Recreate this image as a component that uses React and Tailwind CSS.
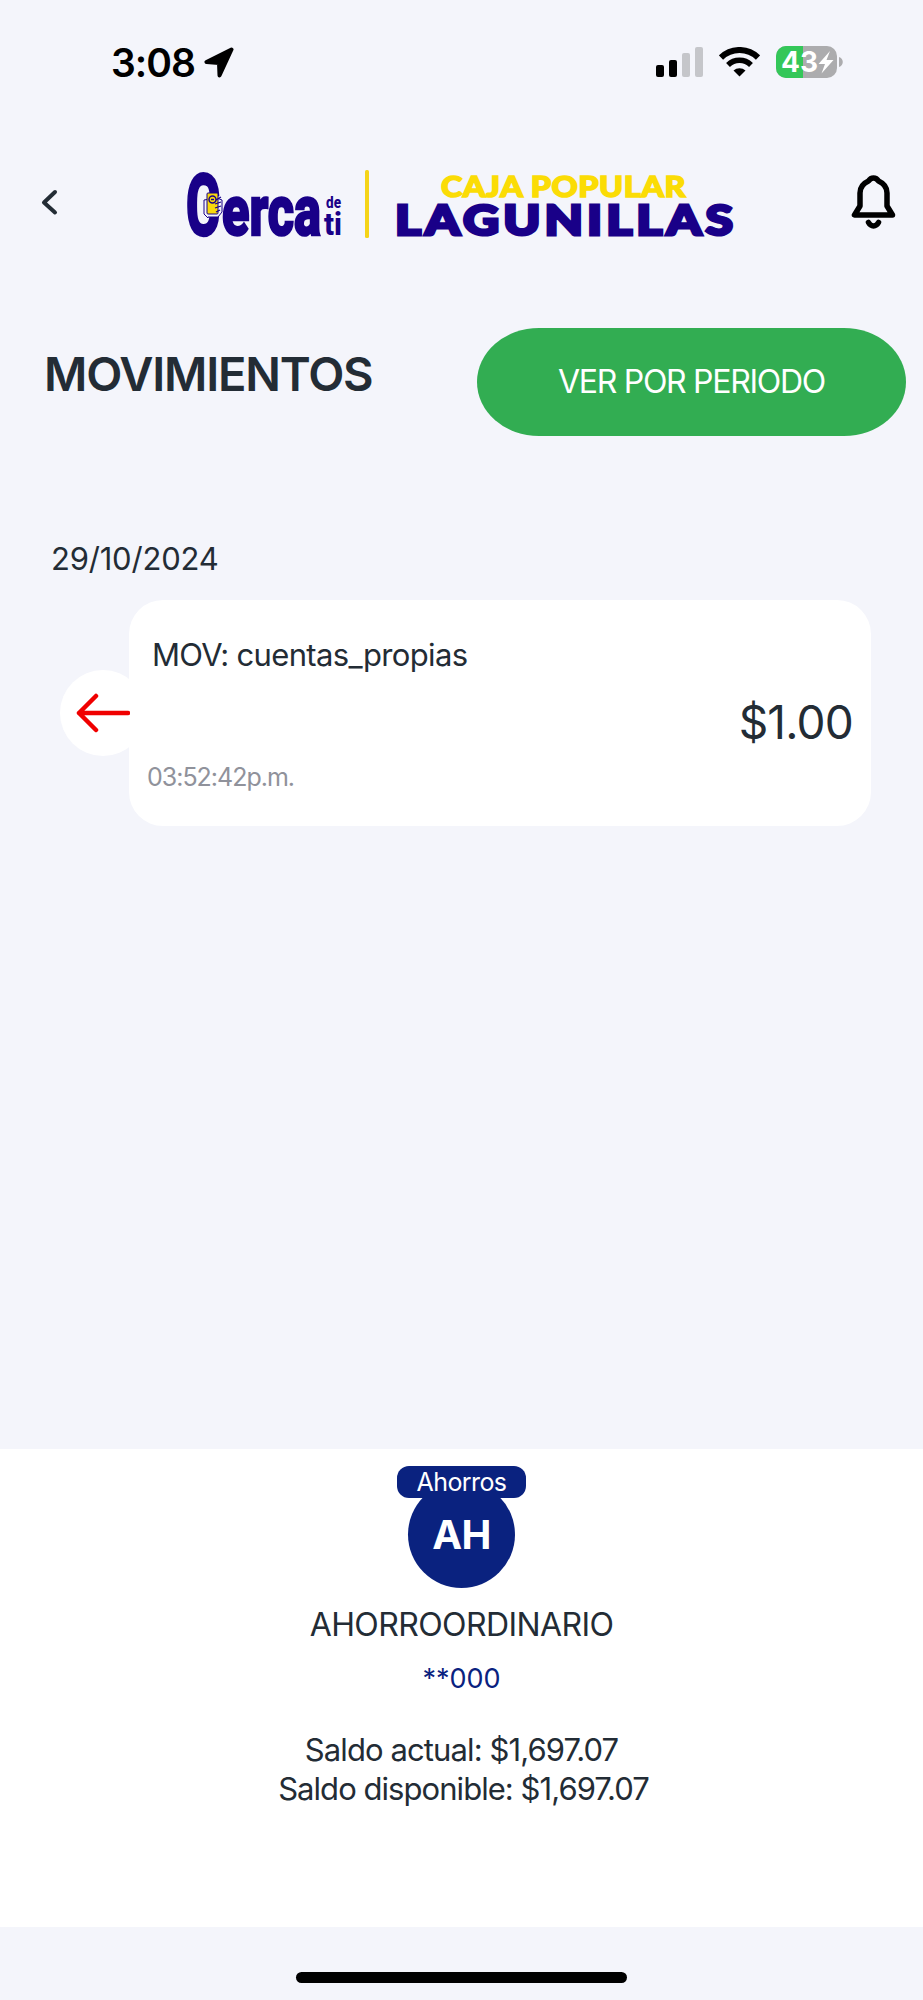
import React from 'react';

const movements = [
    {
        date: '29/10/2024',
        items: [{ id: 1, title: 'MOV: cuentas_propias', time: '03:52:42p.m.', amount: '$1.00' }]
    }
];

const StatusBar = () => (
    <div className="flex h-[124px] items-center justify-between pl-[111px] pr-[80px]">
        <div className="flex items-center gap-[9px]">
            <span className="text-[39px] leading-none font-semibold tracking-[-1px] text-black">3:08</span>
            <svg width="30" height="31" viewBox="0 0 30 31">
                <path d="M27.500 2.500 2.500 15 15 16 15.500 28.500Z" stroke="#000" strokeWidth="4" strokeLinejoin="round" />
            </svg>
        </div>
        <div className="flex items-center">
            <svg width="47" height="30" viewBox="0 0 47 30">
                <rect x="0" y="18" width="8" height="12" rx="2" />
                <rect x="13" y="13" width="8" height="17" rx="2" />
                <rect x="26" y="6" width="8" height="24" rx="2" fill="#c5c6ca" />
                <rect x="39" y="0" width="8" height="30" rx="2" fill="#c5c6ca" />
            </svg>
            <svg className="ml-4" width="41" height="30" viewBox="0 0 41 30" fill="none" stroke="#000">
                <path d="M2 10.500a26.500 26.500 0 0 1 37 0" strokeWidth="6" />
                <path d="M9 18a16.500 16.500 0 0 1 23 0" strokeWidth="5.500" />
                <path d="M20.500 29.500 14.500 23.500a9 9 0 0 1 12 0Z" fill="#000" stroke="none" />
            </svg>
            <svg className="ml-4" width="67" height="32" viewBox="0 0 67 32">
                <clipPath id="battery">
                    <rect width="61" height="32" rx="10" />
                </clipPath>
                <g clipPath="url(#battery)">
                    <rect width="61" height="32" fill="#acacae" />
                    <rect width="27" height="32" fill="#34c759" />
                </g>
                <path d="M63 11c5 1.500 5 8.500 0 10Z" fill="#acacae" />
                <text x="5" y="26" textLength="37" lengthAdjust="spacingAndGlyphs" fontSize="28" fontWeight="700" fill="#fff">43</text>
                <path d="M54 5 42.500 18h6.500l-3.500 9.500L57.500 14h-7Z" fill="#fff" />
            </svg>
        </div>
    </div>
);

const Logo = () => (
    <svg className="overflow-visible" width="560" height="80" viewBox="180 165 560 80" fill="#190088">
        <g className="font-['Roboto',sans-serif]" fontWeight="800" stroke="#190088" strokeWidth="2.500">
            <text x="186" y="234.500" fontSize="85" textLength="34" lengthAdjust="spacingAndGlyphs">C</text>
            <text x="222" y="234.500" fontSize="71" textLength="99" lengthAdjust="spacingAndGlyphs">erca</text>
        </g>
        <g className="font-['Roboto',sans-serif]" fontWeight="800">
            <text x="326" y="208" fontSize="17" textLength="15" lengthAdjust="spacingAndGlyphs">de</text>
            <text x="324" y="235" fontSize="31" textLength="18" lengthAdjust="spacingAndGlyphs">ti</text>
        </g>
        {/* hand holding a phone */}
        <g stroke="#190088" strokeWidth="1">
            <path d="M204 200v14l4 4v-1h10l4-5v-12l-5-2Z" fill="#f4f5fb" />
            <rect x="207" y="193" width="11" height="21" rx="1" fill="#f9d90b" />
            <circle cx="212.500" cy="199.500" r="3.500" fill="#f9d90b" strokeWidth="1.500" />
            <path d="M211 199.500h3M216 200l5-3M215 204l6-2M215 208l6-2M216 212l4-2" fill="none" strokeWidth="1.300" />
        </g>
        <rect x="365" y="170" width="4" height="68" rx="1.500" fill="#f5d418" />
        <g className="font-['Lato',sans-serif]" fontWeight="900">
            <text x="441" y="197" fontSize="29" textLength="245" lengthAdjust="spacingAndGlyphs" letterSpacing="0.5" fill="#fbdc05" stroke="#fbdc05" strokeWidth="1.500">CAJA POPULAR</text>
            <text x="395" y="234.500" fontSize="42.500" textLength="342" lengthAdjust="spacingAndGlyphs" letterSpacing="3.500" stroke="#190088" strokeWidth="3">LAGUNILLAS</text>
        </g>
    </svg>
);

const Header = () => (
    <header className="flex h-[156px] items-center pl-[41px] pr-[27px]">
        <svg width="18" height="28" viewBox="0 0 18 28" fill="none" stroke="#232c35" strokeWidth="4" strokeLinecap="round" strokeLinejoin="round">
            <path d="M14 4 3 14.500 14 24.500" />
        </svg>
        <div className="ml-[121px] mt-[6px]">
            <Logo />
        </div>
        <svg className="ml-auto" width="45" height="56" viewBox="21 14 45 56" fill="none" stroke="#000" strokeWidth="5.500" strokeLinecap="round" strokeLinejoin="round">
            <path d="M24.500 55H62.500L57 46V33C57 27 53 23 48.500 21C46 17 41 17 38.500 21C34 23 30 27 30 33V46Z" />
            <path d="M38.500 62.500C41 67 46 67 48.500 62.500" />
        </svg>
    </header>
);

const Movement = ({ title, time, amount }) => (
    <div className="flex items-center pl-[60px] pr-[52px]">
        <div className="-mr-[17px] flex size-[86px] shrink-0 items-center rounded-full bg-white pl-4">
            <svg className="z-10 shrink-0" width="54" height="40" viewBox="0 0 54 40" fill="none" stroke="#f00000" strokeWidth="4.500" strokeLinecap="round" strokeLinejoin="round">
                <path d="M52 20H3M20 3 3 20 20 37" />
            </svg>
        </div>
        <div className="flex h-[226px] grow items-center justify-between rounded-[34px] bg-white pl-[18px] pr-[18px]">
            <div className="flex h-full flex-col justify-between pt-[35px] pb-[29px]">
                <span className="pl-[5px] text-[31px] leading-10 tracking-[-0.65px]">{title}</span>
                <span className="text-[25px] leading-10 tracking-[-1px] text-[#90929b]">{time}</span>
            </div>
            <span className="pt-[18px] text-[46px] leading-none tracking-[-0.8px]">{amount}</span>
        </div>
    </div>
);

const Account = () => (
    <section className="flex h-[478px] flex-col items-center bg-white pt-[17px]">
        <div className="z-10 h-8 w-[129px] rounded-xl bg-[#0a227f] text-center text-[25px] leading-8 tracking-[-0.6px] text-white">Ahorros</div>
        <div className="-mt-[17px] flex size-[107px] items-center justify-center rounded-full bg-[#0a227f] text-[40px] font-bold tracking-[-0.5px] text-white">AH</div>
        <p className="mt-[17px] text-[32px] leading-10 tracking-[-0.6px]">AHORROORDINARIO</p>
        <p className="mt-[14px] text-[27px] leading-10 text-[#0a227f]">**000</p>
        <p className="mt-[31px] text-[31px] leading-[39px] tracking-[-0.9px]">Saldo actual: $1,697.07</p>
        <p className="pl-1 text-[31px] leading-[39px] tracking-[-0.95px]">Saldo disponible: $1,697.07</p>
    </section>
);

const App = () => {
    return (
        <div className="flex h-[2000px] w-[923px] flex-col overflow-hidden bg-[#f4f5fb] font-['Inter',sans-serif] text-[#232c35]">
            <StatusBar />
            <Header />
            <div className="flex h-[204px] justify-between pt-12 pl-[44px] pr-[17px]">
                <h1 className="mt-4 text-[47px] leading-[60px] font-semibold tracking-[-1.2px]">MOVIMIENTOS</h1>
                <button className="h-[108px] w-[429px] rounded-[62px/54px] bg-[#32ad52] text-[32px] tracking-[-1.3px] text-white">VER POR PERIODO</button>
            </div>
            <main className="grow pt-[55px]">
                {movements.map((group) => (
                    <div key={group.date}>
                        <h2 className="mb-[21px] pl-[51px] text-[31px] leading-10 tracking-[-0.2px]">{group.date}</h2>
                        {group.items.map((item) => (
                            <Movement key={item.id} {...item} />
                        ))}
                    </div>
                ))}
            </main>
            <Account />
            <footer className="flex h-[73px] justify-center pt-[45px]">
                <div className="h-[11px] w-[331px] rounded-full bg-black" />
            </footer>
        </div>
    );
};

export default App;
